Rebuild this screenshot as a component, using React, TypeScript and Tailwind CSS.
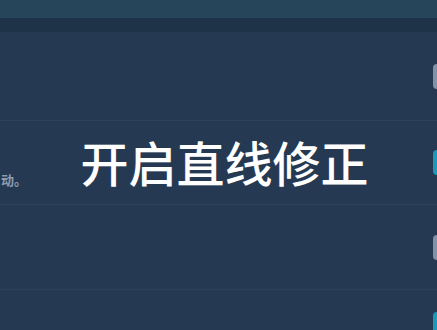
import React from "react";

const font = { fontFamily: '"Noto Sans CJK SC", "Noto Sans", sans-serif' };

function Toggle({ on }: { on: boolean }) {
  return (
    <div
      className={
        "h-[25px] w-[40px] shrink-0 rounded-[4px] -mr-[36px] " +
        (on ? "bg-[#1c98bd]" : "bg-[#8392a8]")
      }
    />
  );
}

export default function App() {
  return (
    <div
      className="relative h-[330px] w-[437px] overflow-hidden bg-[#253a52]"
      style={font}
    >
      <div className="h-[18px] bg-[#26455b]" />
      <div className="h-[14px] bg-[#1e3248]" />
      <div className="flex h-[89px] items-center justify-end border-b border-[#2a425c]">
        <Toggle on={false} />
      </div>
      <div className="flex h-[84px] items-center justify-between border-b border-[#2a425c]">
        <div className="mt-[34px] pl-[1px] text-[13px] font-semibold leading-none text-[#8d9cb0]">
          动。
        </div>
        <Toggle on={true} />
      </div>
      <div className="flex h-[85px] items-center justify-end border-b border-[#2a425c]">
        <Toggle on={false} />
      </div>
      <div className="flex h-[40px] items-start justify-end pt-[22px]">
        <Toggle on={true} />
      </div>
      <div className="absolute left-0 right-0 top-[131px] flex justify-center">
        <div className="ml-[12px] text-[48px] font-medium leading-[60px] text-white">
          开启直线修正
        </div>
      </div>
    </div>
  );
}
